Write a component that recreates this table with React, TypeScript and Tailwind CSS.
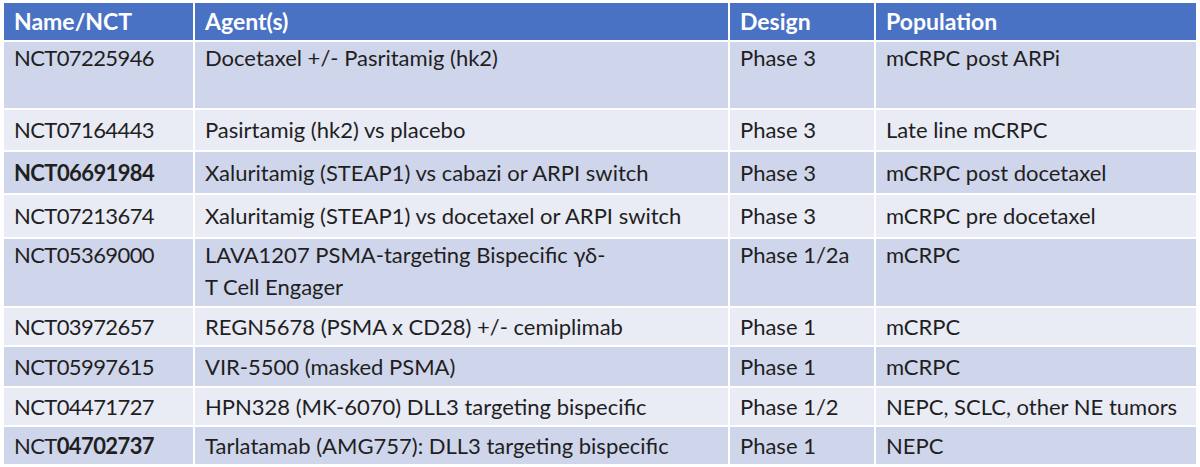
import React from "react";

type Row = {
  nct: React.ReactNode;
  agent: React.ReactNode;
  design: string;
  pop: string;
  h: string;
  top?: boolean;
};

const rows: Row[] = [
  { nct: "NCT07225946", agent: "Docetaxel +/- Pasritamig (hk2)", design: "Phase 3", pop: "mCRPC post ARPi", h: "h-[66px]", top: true },
  { nct: "NCT07164443", agent: "Pasirtamig (hk2) vs placebo", design: "Phase 3", pop: "Late line mCRPC", h: "h-[40px]" },
  { nct: <span className="font-bold">NCT06691984</span>, agent: "Xaluritamig (STEAP1) vs cabazi or ARPI switch", design: "Phase 3", pop: "mCRPC post docetaxel", h: "h-[41px]" },
  { nct: "NCT07213674", agent: "Xaluritamig (STEAP1) vs docetaxel or ARPI switch", design: "Phase 3", pop: "mCRPC pre docetaxel", h: "h-[42px]" },
  { nct: "NCT05369000", agent: <>LAVA1207 PSMA-targeting Bispecific γδ-<br />T Cell Engager</>, design: "Phase 1/2a", pop: "mCRPC", h: "h-[67px]", top: true },
  { nct: "NCT03972657", agent: "REGN5678 (PSMA x CD28) +/- cemiplimab", design: "Phase 1", pop: "mCRPC", h: "h-[37px]" },
  { nct: "NCT05997615", agent: "VIR-5500 (masked PSMA)", design: "Phase 1", pop: "mCRPC", h: "h-[39px]" },
  { nct: "NCT04471727", agent: "HPN328 (MK-6070) DLL3 targeting bispecific", design: "Phase 1/2", pop: "NEPC, SCLC, other NE tumors", h: "h-[37px]" },
  { nct: <>NCT<span className="font-bold">04702737</span></>, agent: "Tarlatamab (AMG757): DLL3 targeting bispecific", design: "Phase 1", pop: "NEPC", h: "h-[37px]" },
];

function Cell({ children, bg, h, top, first }: { children: React.ReactNode; bg: string; h: string; top?: boolean; first?: boolean }) {
  return (
    <div className={`${bg} ${h} flex ${top ? "items-start" : "items-center"} pl-[10px] leading-[32px] ${first ? "tracking-[-0.6px]" : ""}`}>
      <div>{children}</div>
    </div>
  );
}

export default function App() {
  return (
    <div className="w-[1200px] h-[467px] bg-white pt-[3px] pl-[4px] overflow-hidden" style={{ fontFamily: "Lato, 'Open Sans', sans-serif" }}>
      <div className="grid grid-cols-[189px_533px_144px_320px] gap-[2px] text-[22px] text-[#1f1f1f]">
        {["Name/NCT", "Agent(s)", "Design", "Population"].map((t) => (
          <div key={t} className="bg-[#4a72c4] h-[37px] flex items-center pl-[10px] font-bold text-white text-[23px]">
            {t}
          </div>
        ))}
        {rows.map((r, i) => {
          const bg = i % 2 === 0 ? "bg-[#cfd5ea]" : "bg-[#e9ebf5]";
          return (
            <React.Fragment key={i}>
              <Cell bg={bg} h={r.h} top={r.top} first>{r.nct}</Cell>
              <Cell bg={bg} h={r.h} top={r.top}>{r.agent}</Cell>
              <Cell bg={bg} h={r.h} top={r.top}>{r.design}</Cell>
              <Cell bg={bg} h={r.h} top={r.top}>{r.pop}</Cell>
            </React.Fragment>
          );
        })}
      </div>
    </div>
  );
}
